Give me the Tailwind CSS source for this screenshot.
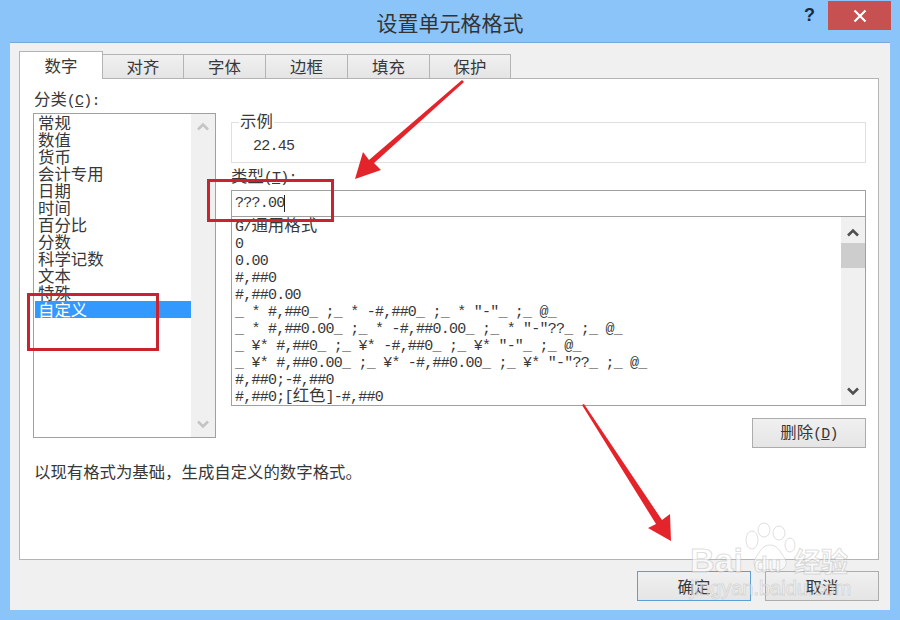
<!DOCTYPE html>
<html lang="zh-CN">
  <head>
    <meta charset="UTF-8" />
    <title>设置单元格格式</title>
    <script src="https://cdn.jsdelivr.net/npm/@tailwindcss/browser@4"></script>
  </head>
  <body class="relative w-[900px] h-[620px] overflow-hidden bg-[#8ac4f8] text-[16.4px] leading-[17px] text-[#383838] font-['Noto_Sans_CJK_SC',sans-serif]">
    <!-- title bar -->
    <header class="h-[42px] px-[9px] flex items-start">
      <div class="flex-1"></div>
      <h1 class="mt-[10px] text-[21px] leading-[24px] font-normal text-[#333]">设置单元格格式</h1>
      <div class="flex-1 flex justify-end items-start">
        <span class="mt-[5px] mr-[13px] text-[18px] leading-[20px] font-bold text-[#1c2b3a] font-['Liberation_Sans',sans-serif]">?</span>
        <button class="mt-[1px] w-[63px] h-[29px] bg-[#c75050] flex items-center justify-center">
          <svg width="14" height="14" viewBox="0 0 14 14"><path d="M1.5 1.5 12.5 12.5M12.5 1.5 1.5 12.5" stroke="#fff" stroke-width="2.2" fill="none"/></svg>
        </button>
      </div>
    </header>

    <!-- dialog client area -->
    <main class="mx-[10px] w-[880px] h-[568px] bg-[#f0f0f0] border-t border-[#78a8d6] pt-[8px] pl-[9px] pr-[11px]">
      <div class="relative z-10 h-[28px] -mb-px flex items-end">
        <div class="w-[84px] h-[28px] bg-white border border-b-0 border-[#b4b4b4] flex items-center justify-center">数字</div>
        <div class="w-[81px] h-[25px] bg-gradient-to-b from-[#f0f0f0] to-[#e5e5e5] border border-l-0 border-[#b4b4b4] flex items-center justify-center">对齐</div>
        <div class="w-[82px] h-[25px] bg-gradient-to-b from-[#f0f0f0] to-[#e5e5e5] border border-l-0 border-[#b4b4b4] flex items-center justify-center">字体</div>
        <div class="w-[82px] h-[25px] bg-gradient-to-b from-[#f0f0f0] to-[#e5e5e5] border border-l-0 border-[#b4b4b4] flex items-center justify-center">边框</div>
        <div class="w-[82px] h-[25px] bg-gradient-to-b from-[#f0f0f0] to-[#e5e5e5] border border-l-0 border-[#b4b4b4] flex items-center justify-center">填充</div>
        <div class="w-[81px] h-[25px] bg-gradient-to-b from-[#f0f0f0] to-[#e5e5e5] border border-l-0 border-[#b4b4b4] flex items-center justify-center">保护</div>
      </div>

      <section class="h-[482px] bg-white border border-[#b4b4b4] pl-[13px] pt-[10px]">
        <div class="flex">
          <!-- category column -->
          <div class="w-[183px]">
            <div class="h-[24px] pl-[1px] leading-[18px]">分类<span class="text-[15px] tracking-[-0.77px] font-['Liberation_Mono',monospace]">(<u>C</u>):</span></div>
            <div class="h-[325px] border border-[#a0a0a0] flex">
              <ul class="flex-1 pl-[4px]">
                <li class="h-[17px] -ml-[3px] pl-[3px]">常规</li>
                <li class="h-[17px] -ml-[3px] pl-[3px]">数值</li>
                <li class="h-[17px] -ml-[3px] pl-[3px]">货币</li>
                <li class="h-[17px] -ml-[3px] pl-[3px]">会计专用</li>
                <li class="h-[17px] -ml-[3px] pl-[3px]">日期</li>
                <li class="h-[17px] -ml-[3px] pl-[3px]">时间</li>
                <li class="h-[17px] -ml-[3px] pl-[3px]">百分比</li>
                <li class="h-[17px] -ml-[3px] pl-[3px]">分数</li>
                <li class="h-[17px] -ml-[3px] pl-[3px]">科学记数</li>
                <li class="h-[17px] -ml-[3px] pl-[3px]">文本</li>
                <li class="h-[17px] -ml-[3px] pl-[3px]">特殊</li>
                <li class="h-[17px] -ml-[3px] pl-[3px] bg-[#3399ff] text-white">自定义</li>
              </ul>
              <div class="w-[24px] bg-[#f0f0f0] flex flex-col justify-between items-center py-[8px]">
                <svg width="14" height="9" viewBox="0 0 14 9"><path d="M2 7.5 7 2.5 12 7.5" stroke="#c4c4c4" stroke-width="2.6" fill="none"/></svg>
                <svg width="14" height="9" viewBox="0 0 14 9"><path d="M2 1.5 7 6.5 12 1.5" stroke="#c4c4c4" stroke-width="2.6" fill="none"/></svg>
              </div>
            </div>
          </div>

          <!-- type column -->
          <div class="ml-[15px] w-[635px]">
            <fieldset class="mt-[23px] h-[51px] border border-[#e0e0e0] pl-[7px]">
              <legend class="px-[1px] pb-[4px] leading-[17px]">示例</legend>
              <div class="pl-[14px] pt-[5px] text-[15px] tracking-[-0.77px] font-['Liberation_Mono',monospace]">22.45</div>
            </fieldset>
            <div class="mt-[3px] h-[24px] leading-[18px]">类型<span class="text-[15px] tracking-[-0.77px] font-['Liberation_Mono',monospace]">(<u>T</u>):</span></div>
            <div class="h-[26px] border border-[#a0a0a0] border-b-0 pl-[3px] flex items-center text-[15px] tracking-[-0.77px] font-['Liberation_Mono',monospace]">???.00<span class="w-px h-[17px] bg-[#222]"></span></div>
            <div class="h-[190px] border border-[#a0a0a0] flex">
              <ul class="flex-1 pl-[3px] pt-[2px] text-[15px] tracking-[-0.77px] font-['Liberation_Mono','Noto_Sans_CJK_SC',monospace] overflow-hidden">
                <li class="h-[17px] whitespace-pre">G/<span class="text-[16.4px] leading-[1px] tracking-normal font-['Noto_Sans_CJK_SC',sans-serif]">通用格式</span></li>
                <li class="h-[17px] whitespace-pre">0</li>
                <li class="h-[17px] whitespace-pre">0.00</li>
                <li class="h-[17px] whitespace-pre">#,##0</li>
                <li class="h-[17px] whitespace-pre">#,##0.00</li>
                <li class="h-[17px] whitespace-pre">_ * #,##0_ ;_ * -#,##0_ ;_ * "-"_ ;_ @_</li>
                <li class="h-[17px] whitespace-pre">_ * #,##0.00_ ;_ * -#,##0.00_ ;_ * "-"??_ ;_ @_</li>
                <li class="h-[17px] whitespace-pre">_ ¥* #,##0_ ;_ ¥* -#,##0_ ;_ ¥* "-"_ ;_ @_</li>
                <li class="h-[17px] whitespace-pre">_ ¥* #,##0.00_ ;_ ¥* -#,##0.00_ ;_ ¥* "-"??_ ;_ @_</li>
                <li class="h-[17px] whitespace-pre">#,##0;-#,##0</li>
                <li class="h-[17px] whitespace-pre">#,##0;[<span class="text-[16.4px] leading-[1px] tracking-normal font-['Noto_Sans_CJK_SC',sans-serif]">红色</span>]-#,##0</li>
              </ul>
              <div class="w-[24px] bg-[#f0f0f0] flex flex-col items-center pt-[11px] pb-[9px]">
                <svg width="14" height="9" viewBox="0 0 14 9"><path d="M2 7.5 7 2.5 12 7.5" stroke="#505050" stroke-width="2.6" fill="none"/></svg>
                <div class="w-full h-[25px] mt-[6px] bg-[#cdcdcd]"></div>
                <svg class="mt-auto" width="14" height="9" viewBox="0 0 14 9"><path d="M2 1.5 7 6.5 12 1.5" stroke="#505050" stroke-width="2.6" fill="none"/></svg>
              </div>
            </div>
            <div class="mt-[12px] flex justify-end">
              <button class="w-[114px] h-[30px] bg-gradient-to-b from-[#f0f0f0] to-[#e5e5e5] border border-[#acacac]">删除<span class="text-[15px] tracking-[-0.77px] font-['Liberation_Mono',monospace]">(<u>D</u>)</span></button>
            </div>
          </div>
        </div>
        <p class="mt-[14px] pl-[1px] leading-[18px]">以现有格式为基础，生成自定义的数字格式。</p>
      </section>

      <div class="mt-[11px] flex justify-end gap-[14px]">
        <button class="w-[114px] h-[30px] bg-gradient-to-b from-[#f0f0f0] to-[#e5e5e5] border border-[#5a9fd6]">确定</button>
        <button class="w-[114px] h-[30px] bg-gradient-to-b from-[#f0f0f0] to-[#e5e5e5] border border-[#acacac]">取消</button>
      </div>
    </main>

    <!-- screenshot annotations -->
    <div class="absolute left-[207px] top-[179px] w-[127px] h-[43px] border-[3px] border-[#c8232f]"></div>
    <div class="absolute left-[27px] top-[293px] w-[132px] h-[58px] border-[3px] border-[#c8232f]"></div>
    <svg class="absolute left-0 top-0 pointer-events-none" width="900" height="620" viewBox="0 0 900 620">
      <polygon points="464,82 462,80 369,160 363,152 355,179 381,170 374,163" fill="#e3242b"/>
      <polygon points="582,405 584,404 662,520 670,514 671,541 648,528 656,524" fill="#e3242b"/>
      <g fill="#fff" fill-opacity=".5" stroke="#b8b8b8" stroke-opacity=".45">
        <ellipse cx="752" cy="540" rx="6" ry="9"/>
        <ellipse cx="764" cy="530" rx="6" ry="7"/>
        <ellipse cx="779" cy="533" rx="6" ry="7"/>
        <ellipse cx="790" cy="545" rx="5" ry="7"/>
        <path d="M770 545c-8 0-10 7-14 12-5 7 0 14 8 13 4-1 8-1 12 0 9 1 13-6 8-13-4-5-6-12-14-12z"/>
      </g>
    </svg>
    <div class="absolute left-[690px] top-[542px] text-[34px] leading-[36px] font-bold text-white/60 [-webkit-text-stroke:1px_rgba(170,170,170,.4)] font-['Liberation_Sans',sans-serif]">Bai</div>
    <div class="absolute left-[754px] top-[553px] text-[22px] leading-[24px] font-bold text-white/50 [-webkit-text-stroke:1px_rgba(170,170,170,.4)] font-['Liberation_Sans',sans-serif]">du</div>
    <div class="absolute left-[794px] top-[546px] text-[27px] leading-[30px] font-bold text-white/60 [-webkit-text-stroke:1px_rgba(170,170,170,.4)]">经验</div>
    <div class="absolute left-[690px] top-[576px] text-[20px] leading-[24px] text-white/50 [-webkit-text-stroke:1px_rgba(170,170,170,.35)] font-['Liberation_Sans',sans-serif]">jingyan.baidu.com</div>
  </body>
</html>
